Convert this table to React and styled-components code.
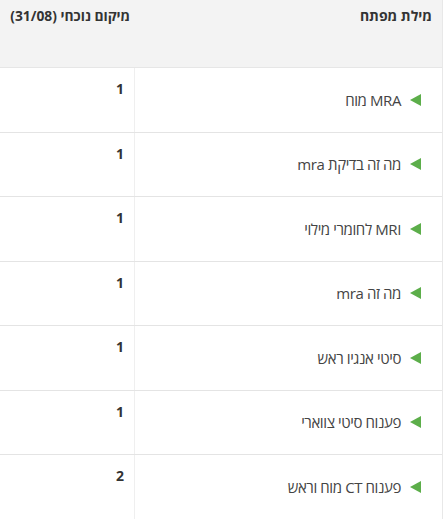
import styled, { createGlobalStyle } from "styled-components";

const GlobalStyle = createGlobalStyle`
  body {
    margin: 0;
    background: #fff;
    font-family: "Open Sans", "DejaVu Sans", sans-serif;
    color: #333;
  }
`;

const rows = [
  { keyword: "MRA מוח", rank: 1 },
  { keyword: "מה זה בדיקת mra", rank: 1 },
  { keyword: "MRI לחומרי מילוי", rank: 1 },
  { keyword: "מה זה mra", rank: 1 },
  { keyword: "סיטי אנגיו ראש", rank: 1 },
  { keyword: "פענוח סיטי צווארי", rank: 1 },
  { keyword: "פענוח CT מוח וראש", rank: 2 },
];

const App = () => {
  return (
    <>
      <GlobalStyle />
      <Table>
        <Header>
          <HeadCell>מילת מפתח</HeadCell>
          <HeadCell $size={13.8} $pad={4}>מיקום נוכחי (31/08)</HeadCell>
        </Header>
        {rows.map((row) => (
          <Row key={row.keyword}>
            <KeywordCell>
              <Arrow />
              <span>{row.keyword}</span>
            </KeywordCell>
            <RankCell>{row.rank}</RankCell>
          </Row>
        ))}
      </Table>
    </>
  );
};

const Table = styled.div`
  direction: rtl;
  width: 442px;
  border-right: 1px solid #e8e8e8;
  overflow: hidden;
  height: 519px;
`;

const Header = styled.div`
  display: grid;
  grid-template-columns: 308px 1fr;
  height: 67px;
  background: #f3f3f3;
  border-bottom: 1px solid #e6e6e6;
`;

const HeadCell = styled.div`
  padding: 6px ${(p) => p.$pad ?? 10}px 0 0;
  font-size: ${(p) => p.$size || 14}px;
  font-weight: 700;
  color: #333;
  white-space: nowrap;
`;

const Row = styled.div`
  display: grid;
  grid-template-columns: 308px 1fr;
  height: 63.5px;
  border-bottom: 1px solid #e4e4e4;
`;

const KeywordCell = styled.div`
  display: flex;
  align-items: center;
  gap: 9px;
  padding-right: 21px;
  border-left: 1px solid #efefef;
  font-size: 15px;
  color: #444;
  letter-spacing: -0.4px;
`;

const Arrow = styled.span`
  width: 0;
  height: 0;
  border-top: 6px solid transparent;
  border-bottom: 6px solid transparent;
  border-right: 11px solid #5cae4a;
`;

const RankCell = styled.div`
  padding: 11px 10px 0 0;
  font-size: 14px;
  font-weight: 700;
  color: #333;
`;

export default App;
